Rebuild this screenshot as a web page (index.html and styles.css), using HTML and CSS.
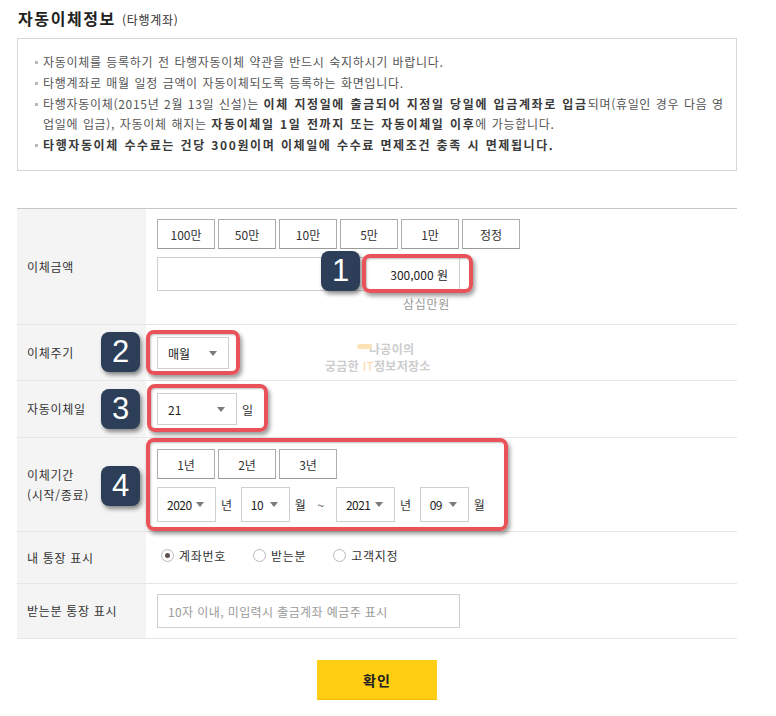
FILE: index.html
```html
<!DOCTYPE html>
<html lang="ko">
<head>
<meta charset="utf-8">
<title>자동이체정보</title>
<link rel="stylesheet" href="styles.css">
</head>
<body>
<div class="page">
  <h2 class="title">자동이체정보 <small>(타행계좌)</small></h2>

  <div class="notice">
    <ul>
      <li>자동이체를 등록하기 전 타행자동이체 약관을 반드시 숙지하시기 바랍니다.</li>
      <li>타행계좌로 매월 일정 금액이 자동이체되도록 등록하는 화면입니다.</li>
      <li>타행자동이체(2015년 2월 13일 신설)는 <b>이체 지정일에 출금되어 지정일 당일에 입금계좌로 입금</b>되며(휴일인 경우 다음 영<br>업일에 입금), 자동이체 해지는 <b>자동이체일 1일 전까지 또는 자동이체일 이후</b>에 가능합니다.</li>
      <li><b>타행자동이체 수수료는 건당 300원이며 이체일에 수수료 면제조건 충족 시 면제됩니다.</b></li>
    </ul>
  </div>

  <div class="form">
    <div class="row row-amount">
      <div class="label">이체금액</div>
      <div class="field">
        <div class="btns">
          <span class="btn">100만</span><span class="btn">50만</span><span class="btn">10만</span><span class="btn">5만</span><span class="btn">1만</span><span class="btn">정정</span>
        </div>
        <div class="amount">300,000 원</div>
        <div class="amount-han">삼십만원</div>
      </div>
      <span class="badge badge-1">1</span>
      <span class="mark mark-1"></span>
    </div>

    <div class="row row-select">
      <div class="label">이체주기</div>
      <div class="field">
        <div class="inline">
          <span class="select w-cycle"><span>매월</span><i class="arrow"></i></span>
        </div>
      </div>
      <div class="watermark">
        <div class="wm-top"><span class="wm-pill"></span>나공이의</div>
        <div class="wm-bottom">궁금한 <span class="wm-it">IT</span>정보저장소</div>
      </div>
      <span class="badge badge-2">2</span>
      <span class="mark mark-2"></span>
    </div>

    <div class="row row-select row-day">
      <div class="label">자동이체일</div>
      <div class="field">
        <div class="inline">
          <span class="select w-day"><span>21</span><i class="arrow"></i></span>
          <span class="unit">일</span>
        </div>
      </div>
      <span class="badge badge-3">3</span>
      <span class="mark mark-3"></span>
    </div>

    <div class="row row-period">
      <div class="label">이체기간<br>(시작/종료)</div>
      <div class="field">
        <div class="btns">
          <span class="btn">1년</span><span class="btn">2년</span><span class="btn">3년</span>
        </div>
        <div class="inline period">
          <span class="select w-year"><span>2020</span><i class="arrow"></i></span>
          <span class="unit">년</span>
          <span class="select w-month"><span>10</span><i class="arrow"></i></span>
          <span class="unit">월</span>
          <span class="tilde">~</span>
          <span class="select w-year"><span>2021</span><i class="arrow"></i></span>
          <span class="unit">년</span>
          <span class="select w-month"><span>09</span><i class="arrow"></i></span>
          <span class="unit">월</span>
        </div>
      </div>
      <span class="badge badge-4">4</span>
      <span class="mark mark-4"></span>
    </div>

    <div class="row row-radio">
      <div class="label">내 통장 표시</div>
      <div class="field">
        <div class="radios">
          <label class="radio"><span class="dot checked"></span>계좌번호</label>
          <label class="radio"><span class="dot"></span>받는분</label>
          <label class="radio"><span class="dot"></span>고객지정</label>
        </div>
      </div>
    </div>

    <div class="row row-memo">
      <div class="label">받는분 통장 표시</div>
      <div class="field">
        <div class="memo">10자 이내, 미입력시 출금계좌 예금주 표시</div>
      </div>
    </div>
  </div>

  <div class="actions">
    <button class="confirm" type="button">확인</button>
  </div>
</div>
</body>
</html>
```

FILE: styles.css
```css
* { box-sizing: border-box; }

body {
  margin: 0;
  background: #fff;
  font-family: "Noto Sans CJK KR", "Noto Sans", sans-serif;
  font-size: 12px;
  letter-spacing: 0.7px;
  color: #333;
}

.page {
  width: 754px;
  padding: 8px 0 0 17px;
}

.title {
  margin: 0;
  height: 20px;
  line-height: 20px;
  padding-left: 1px;
  font-size: 16px;
  font-weight: bold;
  letter-spacing: 1.6px;
  color: #222;
}

.title small {
  font-size: 12px;
  font-weight: normal;
  letter-spacing: 0.7px;
  color: #333;
  margin-left: 0;
}

.notice {
  width: 720px;
  margin-top: 10px;
  border: 1px solid #d6d6d6;
  padding: 13px 10px 15px 16px;
}

.notice ul {
  list-style: none;
  margin: 0;
  padding: 0;
}

.notice li {
  position: relative;
  padding-left: 9px;
  line-height: 20px;
  margin-bottom: 1px;
  color: #555;
  word-spacing: 0.6px;
  white-space: nowrap;
}

.notice li:last-child { margin-bottom: 0; }

.notice li::before {
  content: "";
  position: absolute;
  left: 1px;
  top: 9px;
  width: 3px;
  height: 3px;
  background: #b8b8b8;
}

.notice b {
  color: #3a3a3a;
  letter-spacing: 1.6px;
}

/* form table */
.form {
  width: 720px;
  margin-top: 37px;
  border-top: 1px solid #c6c6c6;
}

.row {
  position: relative;
  display: grid;
  grid-template-columns: 129px 1fr;
  border-bottom: 1px solid #e6e6e6;
}

.label {
  display: flex;
  align-items: center;
  padding-left: 10px;
  background: #f4f4f4;
  line-height: 20px;
  color: #333;
}

.field {
  display: flex;
  flex-direction: column;
  justify-content: center;
  padding-left: 11px;
}

.btns {
  display: flex;
  gap: 3px;
  height: 30px;
}

.btn {
  width: 58px;
  height: 30px;
  display: flex;
  align-items: center;
  justify-content: center;
  border: 1px solid #adadad;
  border-bottom-color: #9a9a9a;
  background: #fff;
  color: #333;
  letter-spacing: 0;
}

/* amount row */
.row-amount .field { padding-top: 10px; padding-bottom: 11px; }

.amount {
  width: 303px;
  height: 34px;
  margin-top: 8px;
  border: 1px solid #cfcfcf;
  display: flex;
  align-items: center;
  justify-content: flex-end;
  padding-right: 11px;
  color: #222;
  letter-spacing: 0;
}

.amount-han {
  width: 303px;
  margin-top: 4px;
  line-height: 18px;
  text-align: right;
  padding-right: 10px;
  color: #999;
}

/* selects */
.row-select .field { padding-top: 12px; padding-bottom: 11px; }
.row-day .field { padding-bottom: 12px; }

.inline {
  display: flex;
  align-items: center;
}

.select {
  display: flex;
  align-items: center;
  justify-content: space-between;
  height: 32px;
  padding: 0 11px 0 10px;
  border: 1px solid #cfcfcf;
  background: #fff;
  color: #222;
  letter-spacing: 0;
}

.arrow {
  width: 0;
  height: 0;
  border-left: 4px solid transparent;
  border-right: 4px solid transparent;
  border-top: 5px solid #7a7a7a;
}

.w-cycle { width: 72px; }
.w-day { width: 80px; }
.w-year { width: 59px; }
.w-month { width: 49px; }

.unit {
  margin-left: 5px;
  margin-right: 8px;
  color: #333;
}

.tilde {
  margin-left: 3px;
  margin-right: 11px;
  color: #555;
}

/* period row */
.row-period .field { padding-top: 11px; padding-bottom: 9px; }
.period { margin-top: 8px; }
.period .select { height: 35px; padding: 0 11px 0 9px; letter-spacing: -0.5px; }

/* radio row */
.row-radio { height: 52px; }
.row-radio .field { padding-bottom: 5px; }

.radios {
  display: flex;
  align-items: center;
  padding-left: 4px;
}

.radio {
  display: flex;
  align-items: center;
  margin-right: 27px;
  color: #333;
}

.dot {
  position: relative;
  width: 13px;
  height: 13px;
  border: 1px solid #b9b9b9;
  border-radius: 50%;
  background: #fff;
  margin-right: 5px;
}

.dot.checked::after {
  content: "";
  position: absolute;
  left: 3px;
  top: 3px;
  width: 5px;
  height: 5px;
  border-radius: 50%;
  background: #5e514b;
}

/* memo row */
.row-memo .field { padding-top: 10px; padding-bottom: 10px; }

.memo {
  width: 303px;
  height: 34px;
  border: 1px solid #cfcfcf;
  display: flex;
  align-items: center;
  padding-left: 10px;
  color: #9a9a9a;
  letter-spacing: 0.4px;
}

/* confirm */
.actions {
  width: 720px;
  display: flex;
  justify-content: center;
  padding-top: 21px;
  padding-bottom: 17px;
}

.confirm {
  width: 120px;
  height: 40px;
  border: 0;
  border-bottom: 1px solid #f3b90a;
  background: #ffcd12;
  font-family: inherit;
  font-size: 14px;
  font-weight: bold;
  letter-spacing: 1px;
  color: #222;
}

/* annotations */
.badge {
  position: absolute;
  width: 39px;
  height: 40px;
  border-radius: 8px;
  background: #2c3e58;
  color: #fff;
  font-family: "Liberation Sans", Arial, sans-serif;
  font-size: 31px;
  letter-spacing: 0;
  line-height: 40px;
  text-align: center;
  box-shadow: 2px 3px 4px rgba(0, 0, 0, 0.45);
}

.badge-1 { left: 304px; top: 42px; }
.badge-2 { left: 84px; top: 7px; }
.badge-3 { left: 84px; top: 8px; }
.badge-4 { left: 84px; top: 28px; }

.mark {
  position: absolute;
  border: 4px solid #e8535a;
  border-radius: 8px;
  box-shadow: 2px 3px 4px rgba(0, 0, 0, 0.4), inset 1px 1px 2px rgba(0, 0, 0, 0.25);
}

.mark-1 { left: 345px; top: 45px; width: 111px; height: 39px; }
.mark-2 { left: 129px; top: 5px; width: 94px; height: 45px; }
.mark-3 { left: 130px; top: 3px; width: 121px; height: 48px; }
.mark-4 { left: 129px; top: 0px; width: 362px; height: 93px; }

/* watermark */
.watermark {
  position: absolute;
  left: 308px;
  top: 16px;
  width: 130px;
  font-weight: bold;
  font-size: 12px;
  letter-spacing: 0.3px;
  color: #cdcdcd;
  line-height: 16px;
  white-space: nowrap;
}

.wm-top {
  position: relative;
  padding-left: 44px;
}

.wm-pill {
  position: absolute;
  left: 32px;
  top: 3px;
  width: 15px;
  height: 5px;
  border-radius: 3px;
  background: #fde2b6;
}

.wm-bottom { margin-top: 1px; }

.wm-it {
  color: #fcd7a0;
  font-weight: normal;
}
```
